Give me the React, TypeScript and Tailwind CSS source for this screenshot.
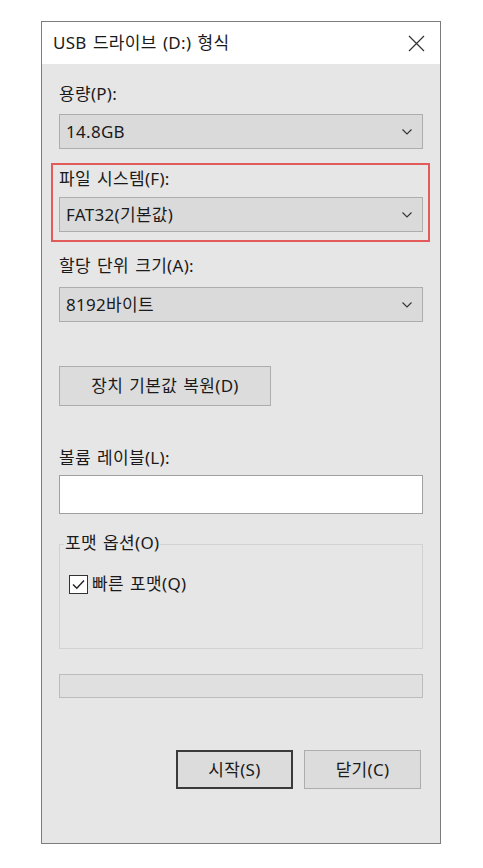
import React from "react";

const font = { fontFamily: '"Noto Sans", "Noto Sans CJK KR", sans-serif' };

function Chevron() {
  return (
    <svg width="12" height="8" viewBox="0 0 12 8" className="shrink-0">
      <path d="M1.5 1.5 L6 6 L10.5 1.5" fill="none" stroke="#333" strokeWidth="1.1" />
    </svg>
  );
}

function Select({ value }: { value: string }) {
  return (
    <div className="flex h-[35px] w-[364px] items-center justify-between border border-[#adadad] bg-[#dadada] pl-[6px] pr-[9px] text-[17px] text-[#1a1a1a]">
      <span>{value}</span>
      <Chevron />
    </div>
  );
}

function Label({ children }: { children: React.ReactNode }) {
  return <div className="h-[20px] text-[17px] leading-[20px] text-[#1a1a1a]">{children}</div>;
}

export default function App() {
  return (
    <div className="min-h-[868px] w-[483px] bg-white pl-[41px] pt-[21px] tracking-[0.3px] [word-spacing:1.5px]" style={font}>
      <div className="flex h-[823px] w-[400px] flex-col border border-[#7d7d7d] bg-[#e6e6e6]">
        <div className="flex h-[42px] items-center justify-between bg-white pl-[11px] pr-[15px] text-[17px] text-[#1a1a1a]">
          <span>USB 드라이브 (D:) 형식</span>
          <svg width="17" height="17" viewBox="0 0 17 17">
            <path d="M1 1 L16 16 M16 1 L1 16" stroke="#333" strokeWidth="1.2" fill="none" />
          </svg>
        </div>
        <div className="flex flex-col pl-[17px]">
          <div className="mt-[20px]">
            <Label>용량(P):</Label>
          </div>
          <div className="mt-[10px]">
            <Select value="14.8GB" />
          </div>
          <div className="ml-[-8px] mt-[14px] flex h-[79px] w-[379px] flex-col border-2 border-[#e35a5a] pl-[6px]">
            <div className="mt-[4px]">
              <Label>파일 시스템(F):</Label>
            </div>
            <div className="mt-[8px]">
              <Select value="FAT32(기본값)" />
            </div>
          </div>
          <div className="mt-[14px]">
            <Label>할당 단위 크기(A):</Label>
          </div>
          <div className="mt-[11px]">
            <Select value="8192바이트" />
          </div>
          <div className="mt-[44px] flex h-[40px] w-[212px] items-center justify-center border border-[#adadad] bg-[#dcdcdc] text-[17px] text-[#1a1a1a]">
            장치 기본값 복원(D)
          </div>
          <div className="mt-[42px]">
            <Label>볼륨 레이블(L):</Label>
          </div>
          <div className="mt-[7px] h-[39px] w-[364px] border border-[#a0a0a0] bg-white" />
          <div className="relative mt-[30px] h-[105px] w-[364px] border border-[#d2d2d2]">
            <div className="absolute left-[4px] top-[-12px] bg-[#e6e6e6] px-[1px] text-[17px] leading-[20px] text-[#1a1a1a]">
              포맷 옵션(O)
            </div>
            <div className="mt-[29px] flex items-center pl-[9px]">
              <div className="flex h-[19px] w-[19px] items-center justify-center border border-[#333] bg-white">
                <svg width="15" height="15" viewBox="0 0 15 15">
                  <path d="M2 7.5 L5.8 11.3 L13 3.5" fill="none" stroke="#222" strokeWidth="1.4" />
                </svg>
              </div>
              <span className="ml-[4px] text-[17px] leading-[20px] text-[#1a1a1a]">빠른 포맷(Q)</span>
            </div>
          </div>
          <div className="mt-[25px] h-[24px] w-[364px] border border-[#bcbcbc] bg-[#e0e0e0]" />
          <div className="mt-[52px] flex w-[362px] justify-end gap-[11px]">
            <div className="flex h-[39px] w-[117px] items-center justify-center border-2 border-[#3a3a3a] bg-[#dcdcdc] text-[17px] text-[#1a1a1a]">
              시작(S)
            </div>
            <div className="flex h-[39px] w-[117px] items-center justify-center border border-[#adadad] bg-[#dcdcdc] text-[17px] text-[#1a1a1a]">
              닫기(C)
            </div>
          </div>
        </div>
      </div>
    </div>
  );
}
